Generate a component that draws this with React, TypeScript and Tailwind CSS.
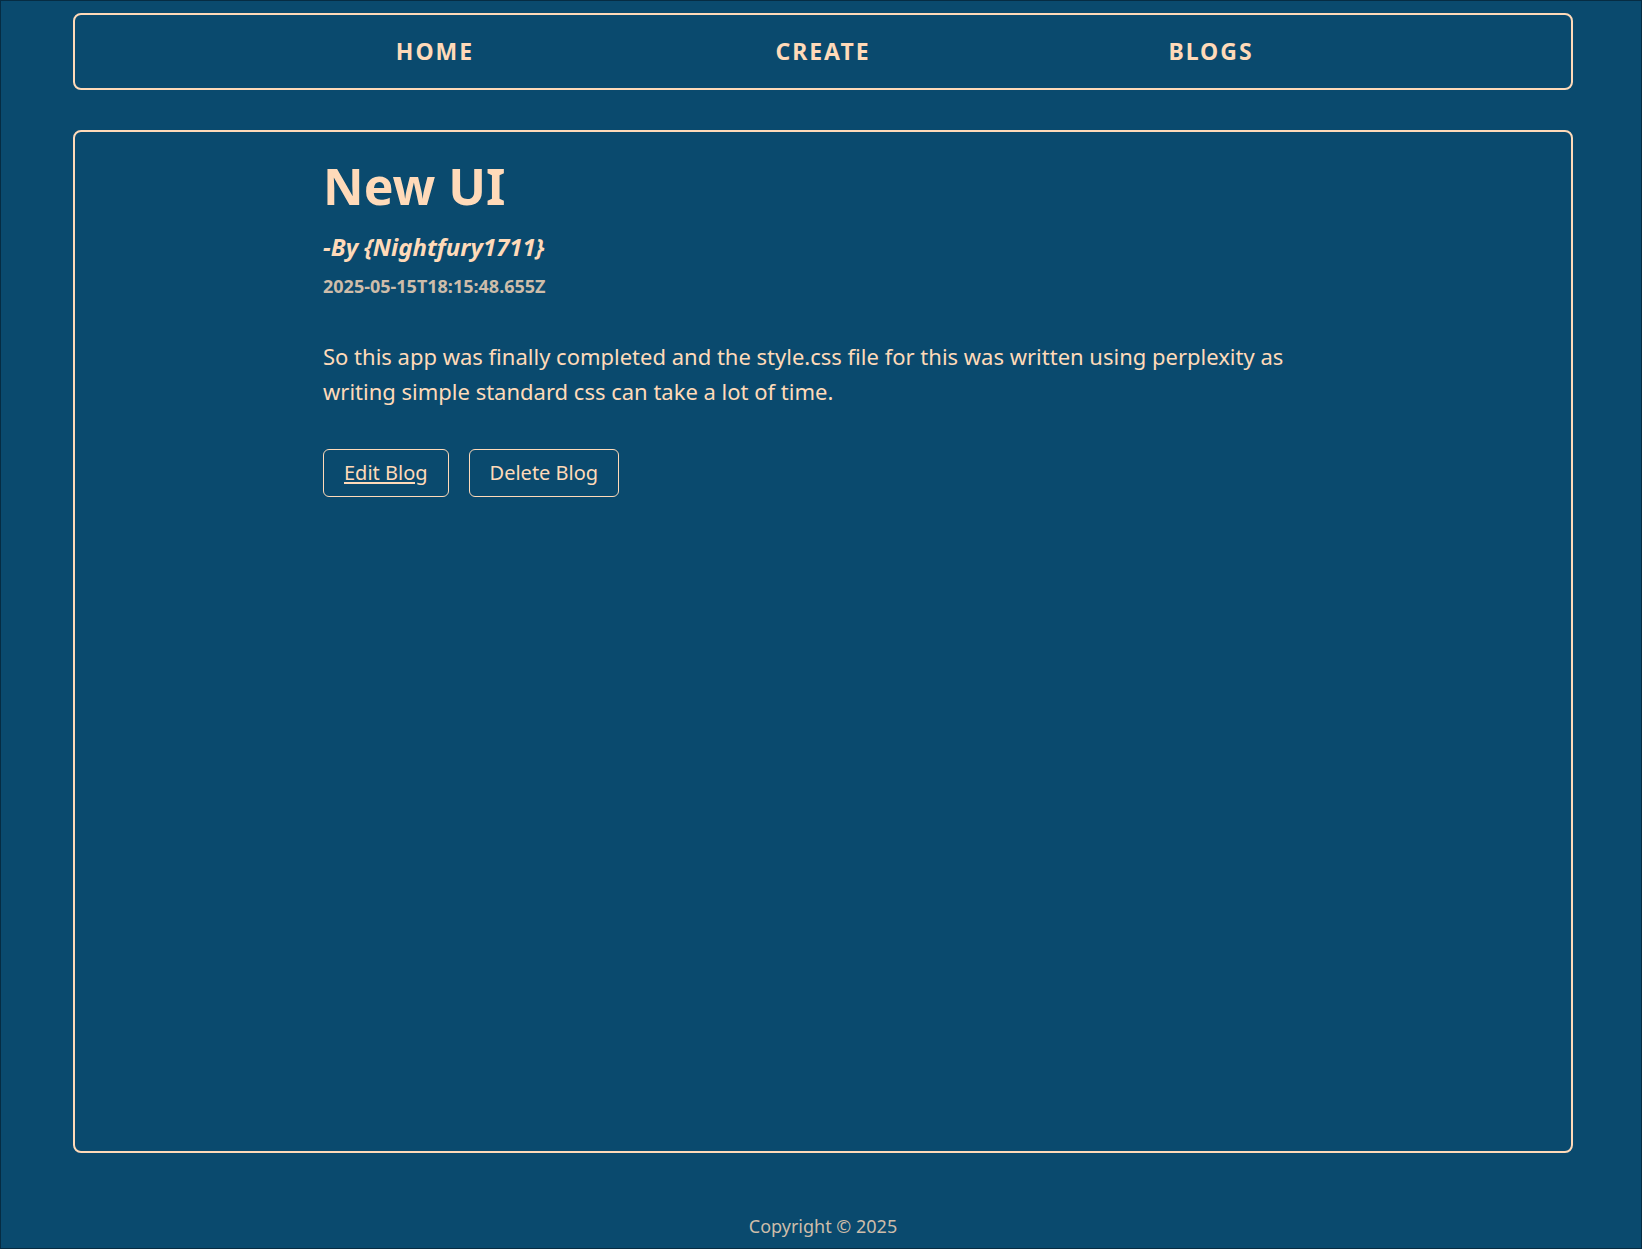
import React from 'react';

const links = ['HOME', 'CREATE', 'BLOGS'];

const blog = {
  title: 'New UI',
  author: 'Nightfury1711',
  createdAt: '2025-05-15T18:15:48.655Z',
  body: 'So this app was finally completed and the style.css file for this was written using perplexity as writing simple standard css can take a lot of time.',
};

const App = () => {
  return (
    <div
      className="min-h-screen h-[1249px] bg-[#0a4a6e] border border-[#062c43] text-[#ffdab9] flex flex-col"
      style={{ fontFamily: '"Noto Sans", "Open Sans", sans-serif' }}
    >
      {/* Navigation */}
      <nav className="mt-[12px] ml-[72px] w-[1500px] h-[77px] border-2 border-[#ffdab9] rounded-lg flex items-center">
        <ul className="grid grid-cols-3 w-[1164px] mx-auto text-center">
          {links.map((link) => (
            <li key={link}>
              <a href="#" className="text-[23px] font-bold tracking-[2px]">
                {link}
              </a>
            </li>
          ))}
        </ul>
      </nav>

      {/* Blog details */}
      <main className="mt-[40px] ml-[72px] w-[1500px] h-[1023px] border-2 border-[#ffdab9] rounded-lg pt-[24px]">
        <div className="max-w-[1000px] mx-auto">
          <h1 className="text-[50px] leading-[1.2] font-bold">{blog.title}</h1>
          <p className="mt-[15px] text-[24px] leading-[1.3] font-bold italic">
            -By {'{'}{blog.author}{'}'}
          </p>
          <p className="mt-[13px] text-[18px] leading-[1.3] font-bold text-[#cebdaa]">
            {blog.createdAt}
          </p>
          <p className="mt-[40px] text-[22px] leading-[35px]">{blog.body}</p>
          <div className="mt-[40px] flex gap-5">
            <a
              href="#"
              className="h-[48px] px-5 flex items-center border border-[#ffdab9] rounded-md text-[20px] underline underline-offset-2"
            >
              Edit Blog
            </a>
            <button className="h-[48px] px-5 flex items-center border border-[#ffdab9] rounded-md text-[20px]">
              Delete Blog
            </button>
          </div>
        </div>
      </main>

      <footer className="mt-auto mb-[8px] ml-[4px] text-center text-[18px] text-[#cebdaa]">
        Copyright © 2025
      </footer>
    </div>
  );
};

export default App;
